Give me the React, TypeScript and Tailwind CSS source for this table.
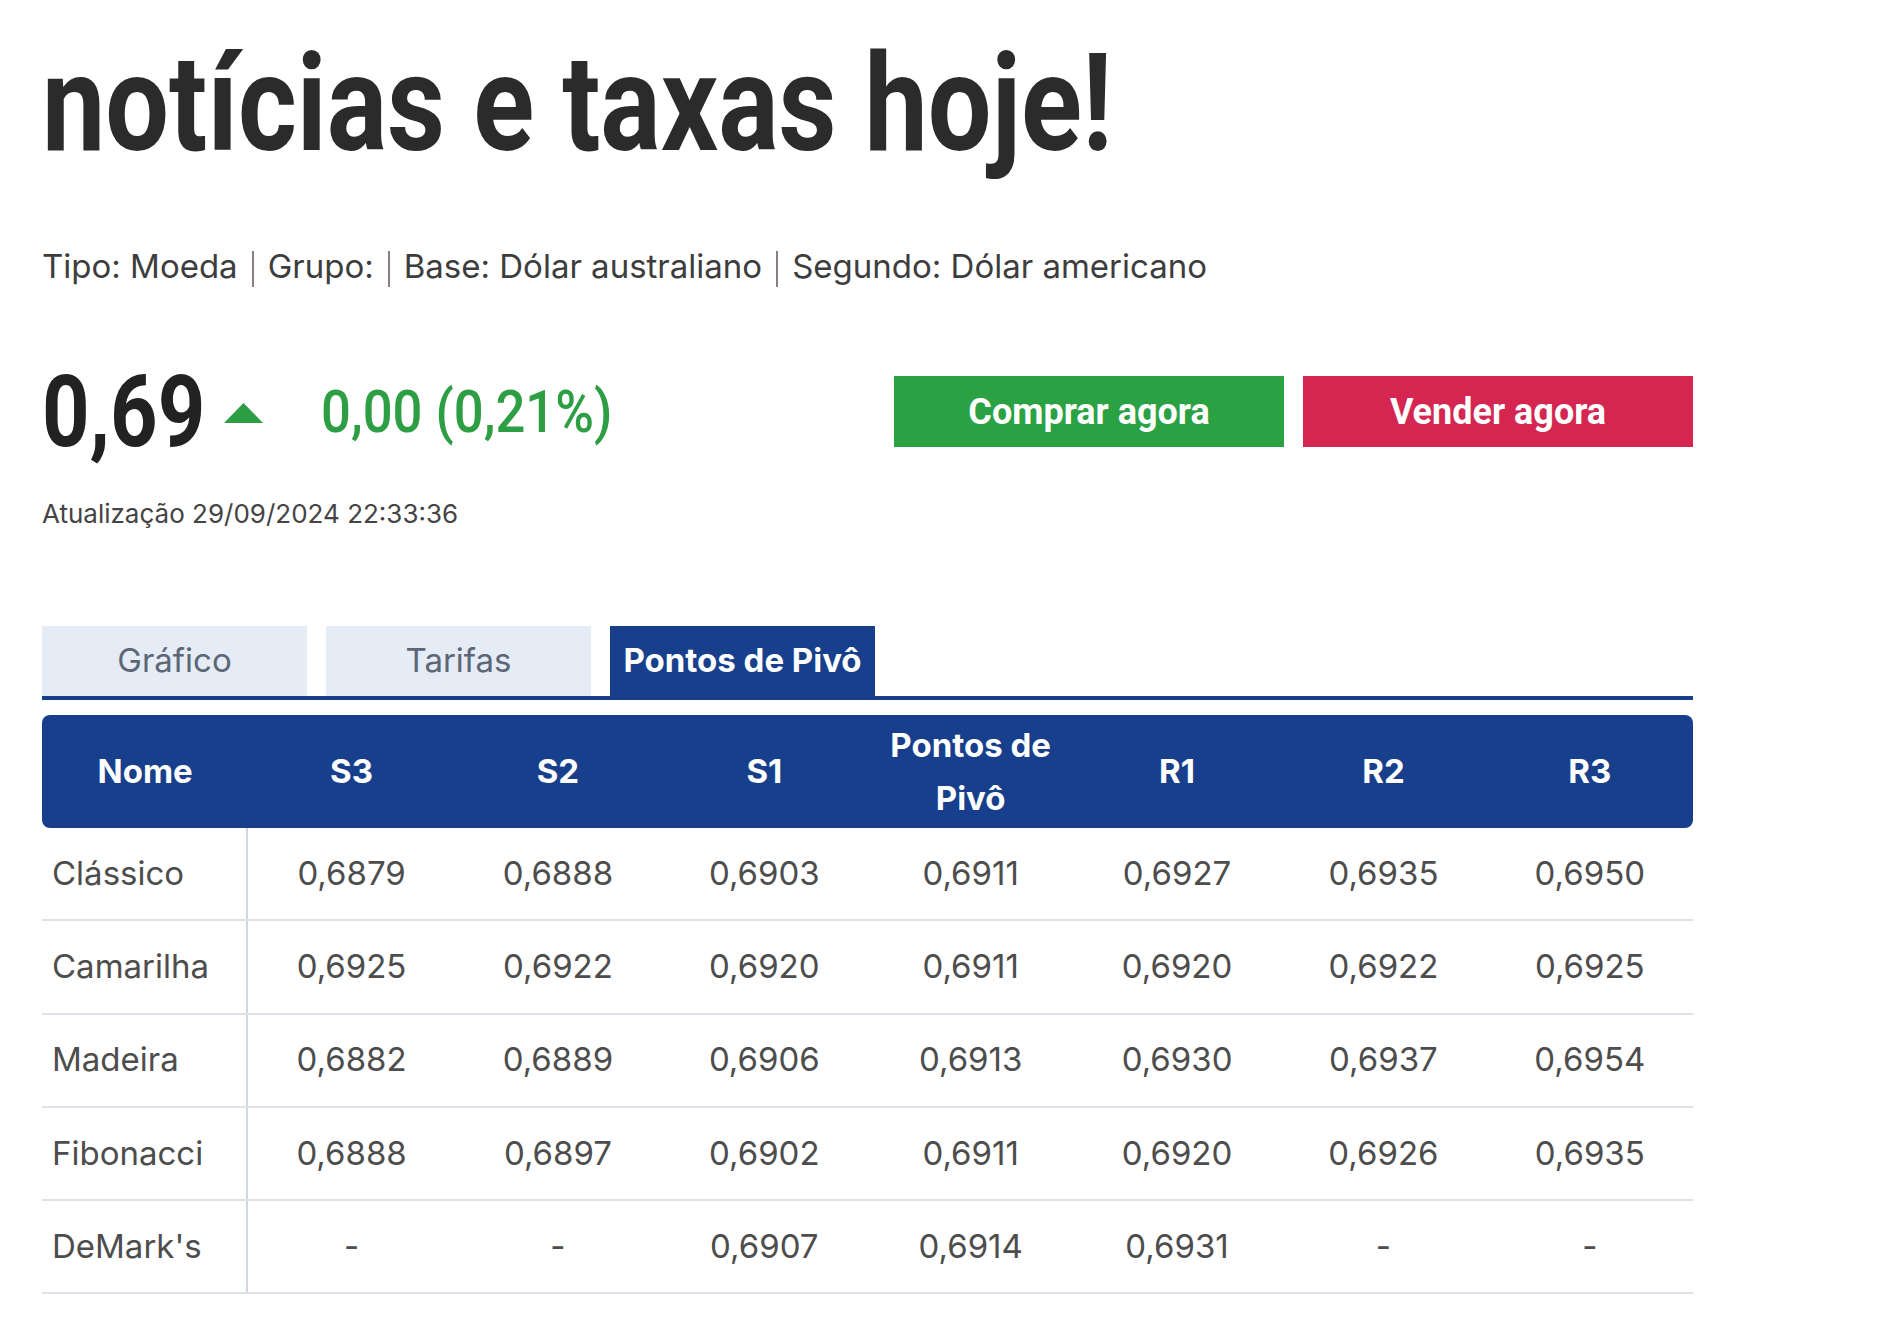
import React from 'react';

const rows: string[][] = [
  ['Clássico', '0,6879', '0,6888', '0,6903', '0,6911', '0,6927', '0,6935', '0,6950'],
  ['Camarilha', '0,6925', '0,6922', '0,6920', '0,6911', '0,6920', '0,6922', '0,6925'],
  ['Madeira', '0,6882', '0,6889', '0,6906', '0,6913', '0,6930', '0,6937', '0,6954'],
  ['Fibonacci', '0,6888', '0,6897', '0,6902', '0,6911', '0,6920', '0,6926', '0,6935'],
  ["DeMark's", '-', '-', '0,6907', '0,6914', '0,6931', '-', '-'],
];

const headers = ['Nome', 'S3', 'S2', 'S1', 'Pontos de Pivô', 'R1', 'R2', 'R3'];

const Sep = () => <span className="inline-block w-[2px] h-[36px] bg-[#8a7f7f] mx-[14px] align-middle" />;

export default function App() {
  return (
    <div className="min-h-screen bg-white pl-[42px] pt-[36px] font-['Inter',sans-serif]">
      <div className="w-[1651px]">
        <h1 className="font-['Roboto',sans-serif] font-bold text-[136px] leading-none text-[#2b2b2b] whitespace-nowrap">
          <span className="inline-block origin-left scale-x-[0.83]">notícias e taxas hoje!</span>
        </h1>

        <div className="mt-[74px] text-[33px] leading-[40px] text-[#3d3d3d] whitespace-nowrap">
          Tipo: Moeda<Sep />Grupo:<Sep />Base: Dólar australiano<Sep />Segundo: Dólar americano
        </div>

        <div className="mt-[89px] flex items-center justify-between h-[71px]">
          <div className="flex items-center">
            <span className="font-['Roboto',sans-serif] font-bold text-[100px] leading-none text-[#222] inline-block w-[158px] whitespace-nowrap">
              <span className="inline-block origin-left scale-x-[0.83]">0,69</span>
            </span>
            <svg width="39" height="20" viewBox="0 0 39 20" className="ml-[24px] mt-[3px]">
              <polygon points="19.5,0 39,20 0,20" fill="#2e9e44" />
            </svg>
            <span className="ml-[58px] font-['Roboto',sans-serif] font-medium text-[60px] leading-none text-[#2e9e44] inline-block w-[292px] whitespace-nowrap">
              <span className="inline-block origin-left scale-x-[0.877]">0,00 (0,21%)</span>
            </span>
          </div>
          <div className="flex gap-[19px]">
            <button className="w-[390px] h-[71px] bg-[#2aa244] text-white font-['Roboto',sans-serif] font-bold text-[36px]">
              Comprar agora
            </button>
            <button className="w-[390px] h-[71px] bg-[#d42651] text-white font-['Roboto',sans-serif] font-bold text-[36px]">
              Vender agora
            </button>
          </div>
        </div>

        <div className="mt-[53px] text-[26px] leading-[28px] text-[#444]">Atualização 29/09/2024 22:33:36</div>

        <div className="mt-[98px] flex gap-[19px] border-b-4 border-[#173f8c]">
          <div className="w-[265px] h-[70px] flex items-center justify-center bg-[#e6ecf6] text-[#5b6676] text-[33px]">Gráfico</div>
          <div className="w-[265px] h-[70px] flex items-center justify-center bg-[#e6ecf6] text-[#5b6676] text-[33px]">Tarifas</div>
          <div className="w-[265px] h-[70px] flex items-center justify-center bg-[#173f8c] text-white font-bold text-[33px]">Pontos de Pivô</div>
        </div>

        <div className="mt-[15px] grid grid-cols-8 h-[113px] rounded-[8px] bg-[#183f8c] text-white font-bold text-[33px]">
          {headers.map(h => (
            <div key={h} className="flex items-center justify-center text-center leading-[53px] px-[10px]">{h}</div>
          ))}
        </div>

        <div>
          {rows.map(r => (
            <div key={r[0]} className="grid grid-cols-8 h-[93.3px] border-b-2 border-[#dde2e8] text-[33px] text-[#4d4d4d]">
              {r.map((c, i) => (
                <div
                  key={i}
                  className={i === 0 ? 'flex items-center pl-[10px] border-r-2 border-[#cfd7e1]' : 'flex items-center justify-center'}
                >
                  {c}
                </div>
              ))}
            </div>
          ))}
        </div>
      </div>
    </div>
  );
}
